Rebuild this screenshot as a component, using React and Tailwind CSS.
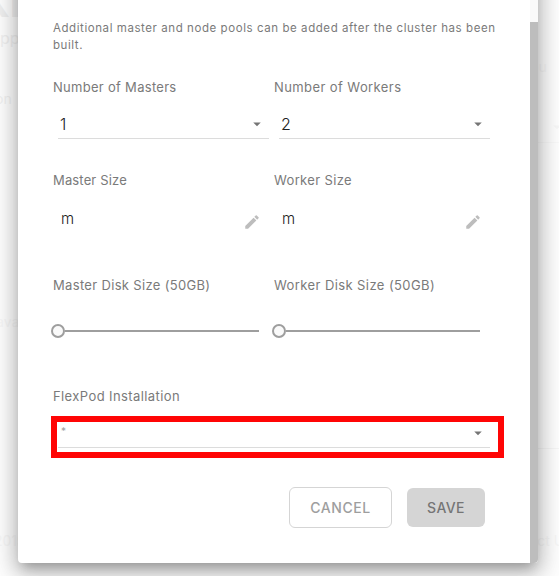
import { MdArrowDropDown, MdEdit } from "react-icons/md";

function Label({ children, className }) {
  return <div className={"h-5 whitespace-nowrap text-[13px] leading-5 text-[#7a7a7a] " + className}>{children}</div>;
}

function Select({ value, className }) {
  return (
    <div className={"flex h-[29px] items-center justify-between border-b border-[#dcdcdc] pl-0.5 pr-[3px] text-base text-[#212121] " + className}>
      <span className="font-light">{value}</span>
      <MdArrowDropDown className="size-[18px] text-[#757575]" />
    </div>
  );
}

function SizeField() {
  return (
    <div className="ml-2 flex h-6 w-[200px] justify-between text-[15px] leading-6 text-[#212121]">
      <span className="mt-px font-light">m</span>
      <MdEdit className="mt-[7px] size-[18px] shrink-0 text-[#bdbdbd]" />
    </div>
  );
}

function Slider() {
  return (
    <div className="-ml-0.5 flex h-[14px] w-[208px] items-center">
      <div className="size-[14px] shrink-0 rounded-full border-2 border-[#9e9e9e] bg-[#fafafa]" />
      <div className="h-0.5 grow bg-[#9e9e9e]" />
    </div>
  );
}

export default function App() {
  return (
    <div className="relative h-[576px] w-[559px] overflow-hidden bg-[#fdfdfd] font-['Inter',sans-serif]">
      <div className="absolute inset-0 text-[#f6f6f6]">
        <span className="absolute -left-[19px] -top-[21px] text-[40px] font-bold leading-[48px] text-[#efefef]">Kr</span>
        <span className="absolute left-0 top-7 text-base leading-5 text-[#f0f0f0]">pp</span>
        <span className="absolute -left-[5px] top-[89px] text-sm leading-5 text-[#f0f0f0]">on</span>
        <span className="absolute -left-1 top-[312px] text-sm leading-5">ava</span>
        <span className="absolute -left-1.5 top-[531px] text-sm leading-5">2019</span>
        <span className="absolute left-[530px] top-[57px] text-sm leading-5">ou</span>
        <span className="absolute left-[529px] top-[531px] whitespace-nowrap text-sm leading-5">ect Us</span>
        <div className="absolute left-[538px] top-[448px] h-px w-[21px] bg-[#f5f5f5]" />
        <MdArrowDropDown className="absolute left-[548px] top-[118px] size-[18px]" />
        <div className="absolute left-[538px] top-[142px] h-px w-[21px] bg-[#f8f8f8]" />
      </div>

      <div className="relative -mt-10 ml-[18px] flex h-[603px] w-[520px] rounded bg-white pt-10 shadow-[0_8px_10px_-5px_rgba(0,0,0,0.2),0_10px_22px_2px_rgba(0,0,0,0.18),0_4px_22px_3px_rgba(0,0,0,0.14)]">
        <div className="flex w-[512px] flex-col pl-[35px] pt-5">
          <p className="whitespace-nowrap text-[11.5px] leading-[17px] tracking-[0.57px] text-[#7a7a7a]">
            Additional master and node pools can be added after the cluster has been<br />built.
          </p>
          <div className="mt-[23px] grid grid-cols-[221px_221px]">
            <Label className="tracking-[0.29px]">Number of Masters</Label>
            <Label className="tracking-[0.41px]">Number of Workers</Label>
          </div>
          <div className="mt-[13px] grid grid-cols-[221px_221px]">
            <Select value="1" className="ml-[5px] w-[211px]" />
            <Select value="2" className="ml-[5px] w-[211px]" />
          </div>
          <div className="mt-[31px] grid grid-cols-[221px_221px]">
            <Label className="tracking-[0.15px]">Master Size</Label>
            <Label className="tracking-[0.35px]">Worker Size</Label>
          </div>
          <div className="mt-4 grid grid-cols-[221px_221px]">
            <SizeField />
            <SizeField />
          </div>
          <div className="mt-[45px] grid grid-cols-[221px_221px]">
            <Label className="tracking-[0.33px]">Master Disk Size (50GB)</Label>
            <Label className="tracking-[0.41px]">Worker Disk Size (50GB)</Label>
          </div>
          <div className="mt-[29px] grid grid-cols-[221px_221px]">
            <Slider />
            <Slider />
          </div>
          <Label className="mt-[48px] tracking-[0.4px]">FlexPod Installation</Label>
          <div className="-ml-0.5 mt-[10px] h-[42px] w-[453px] border-[6px] border-[#ff0505]">
            <div className="ml-px flex h-[26px] w-[432px] justify-between border-b border-[#dcdcdc] pl-[3px] pr-[3px]">
              <span className="mt-[3px] text-[10px] leading-3 text-[#9e9e9e]">*</span>
              <MdArrowDropDown className="mt-0.5 size-[18px] text-[#757575]" />
            </div>
          </div>
          <div className="mt-[29px] flex items-center gap-[15px] pl-[236px] text-sm font-medium">
            <button className="h-[41px] w-[103px] rounded-md border border-[#d5d5d5] bg-white tracking-[0.6px] text-[#9e9e9e]">CANCEL</button>
            <button className="h-[39px] w-[78px] rounded-md bg-[#d5d5d5] tracking-[0.4px] text-[#757575]">SAVE</button>
          </div>
        </div>
        <div className="-mt-10 flex w-2 flex-col overflow-hidden rounded-br bg-[#fafafa] pt-[62px]">
          <div className="grow bg-[#bdbdbd]" />
        </div>
      </div>
    </div>
  );
}
